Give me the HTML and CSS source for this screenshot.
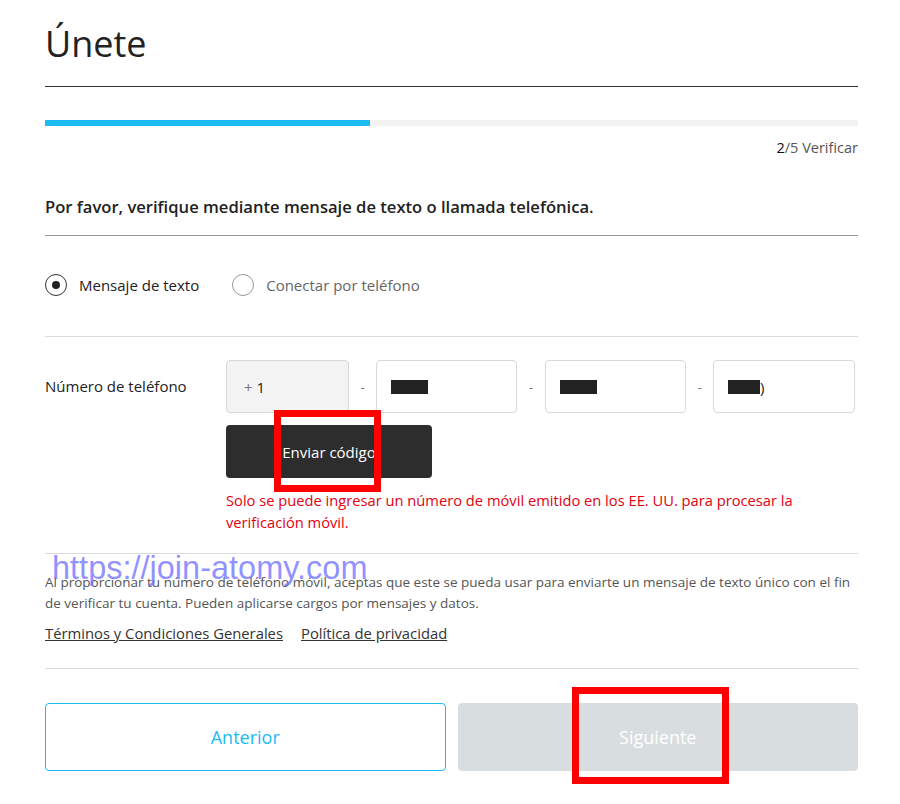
FILE: index.html
```html
<!DOCTYPE html>
<html>
<head>
<meta charset="utf-8">
<title>Únete</title>
<link rel="stylesheet" href="styles.css">
</head>
<body>

<div class="page">

<h1 class="title">Únete</h1>
<div class="rule-dark"></div>

<div class="progress"><div class="progress-fill" style="width:40%"></div></div>
<div class="step"><b>2</b>/5 Verificar</div>

<p class="question">Por favor, verifique mediante mensaje de texto o llamada telefónica.</p>
<div class="rule-mid"></div>

<div class="radios">
  <label class="radio checked"><span class="circle"></span>Mensaje de texto</label>
  <label class="radio"><span class="circle"></span>Conectar por teléfono</label>
</div>
<div class="rule-light"></div>

<div class="phone">
  <div class="phone-label">Número de teléfono</div>
  <div class="phone-body">
    <div class="phone-fields">
      <div class="field code"><span class="plus">+</span> 1</div>
      <span class="dash">-</span>
      <div class="field"><span class="redact"></span></div>
      <span class="dash">-</span>
      <div class="field"><span class="redact"></span></div>
      <span class="dash">-</span>
      <div class="field"><span class="redact short"></span>)</div>
    </div>
    <button class="send">Enviar código</button>
    <p class="error">Solo se puede ingresar un número de móvil emitido en los EE. UU. para procesar la verificación móvil.</p>
  </div>
</div>
<div class="rule-light"></div>

<p class="notice">Al proporcionar tu número de teléfono móvil, aceptas que este se pueda usar para enviarte un mensaje de texto único con el fin de verificar tu cuenta. Pueden aplicarse cargos por mensajes y datos.</p>
<div class="links">
  <a href="#">Términos y Condiciones Generales</a>
  <a href="#">Política de privacidad</a>
</div>
<div class="rule-light bottom"></div>

<div class="actions">
  <button class="prev">Anterior</button>
  <button class="next">Siguiente</button>
</div>

</div>

<div class="watermark">https://join-atomy.com</div>
<div class="mark mark-send"></div>
<div class="mark mark-next"></div>

</body>
</html>
```

FILE: styles.css
```css
body{
margin:0;
background-color:white;
font-family:"Open Sans", "Noto Sans", sans-serif;
color:#222;
}

.page{
width:813px;
padding:22px 42px 0 45px;
}

.title{
margin:0;
font-size:36px;
line-height:44px;
font-weight:400;
color:#222;
}

.rule-dark{
height:1px;
background-color:#333;
margin-top:20px;
}

.rule-mid{
height:1px;
background-color:#999;
margin-top:16px;
}

.rule-light{
height:1px;
background-color:#d9dcde;
}

.progress{
height:6px;
background-color:#f2f2f2;
margin-top:33px;
}

.progress-fill{
height:6px;
background-color:#1bbcf2;
}

.step{
text-align:right;
font-size:14.5px;
line-height:20px;
color:#555;
margin-top:12px;
}
.step b{
font-weight:400;
color:#111;
}

.question{
margin:37px 0 0 0;
font-size:16.6px;
line-height:24px;
font-weight:600;
color:#222;
}

.radios{
display:flex;
gap:33px;
padding:37px 0 39px 0;
}

.radio{
display:flex;
align-items:center;
gap:12px;
font-size:15px;
line-height:24px;
color:#666;
}
.radio.checked{
color:#222;
}

.circle{
width:22px;
height:22px;
box-sizing:border-box;
border:1px solid #999;
border-radius:50%;
display:flex;
align-items:center;
justify-content:center;
}
.radio.checked .circle{
border-color:#333;
}
.radio.checked .circle::after{
content:"";
width:8px;
height:8px;
border-radius:50%;
background-color:#222;
}

.phone{
display:flex;
padding-top:23px;
padding-bottom:20px;
}

.phone-label{
width:181px;
height:51px;
display:flex;
align-items:center;
font-size:15px;
color:#222;
}

.phone-fields{
display:grid;
grid-template-columns:123px 27px 141px 28px 141px 27px 142px;
}

.field{
height:53px;
box-sizing:border-box;
border:1px solid #d6d9dc;
border-radius:4px;
display:flex;
align-items:center;
padding-left:14px;
font-size:15px;
color:#222;
}
.field.code{
background-color:#f3f3f3;
padding-left:17px;
}
.plus{
color:#777;
margin-right:4px;
}

.redact{
display:inline-block;
width:37px;
height:14px;
background-color:#222;
}
.redact.short{
width:32px;
}

.dash{
display:flex;
align-items:center;
justify-content:center;
color:#777;
font-size:13px;
}

.send{
display:block;
margin-top:12px;
width:206px;
height:53px;
border:none;
border-radius:4px;
background-color:#2d2d2d;
color:white;
font-family:"Open Sans", sans-serif;
font-size:15px;
}

.error{
margin:11px 0 0 0;
font-size:14.7px;
line-height:22px;
color:#e3000f;
width:600px;
}

.notice{
margin:18px 0 0 0;
font-size:13.5px;
line-height:21px;
color:#555;
}

.links{
display:flex;
gap:18px;
margin-top:9px;
margin-bottom:24px;
font-size:14.8px;
line-height:21px;
}
.links a{
color:#333;
}

.actions{
display:flex;
gap:12px;
margin-top:34px;
}
.actions button{
flex:1;
height:68px;
border-radius:4px;
font-family:"Open Sans", sans-serif;
font-size:18px;
}
.prev{
background-color:white;
border:1px solid #1bbcf2;
color:#1bbcf2;
}
.next{
background-color:#d8dde0;
border:1px solid #d8dde0;
color:white;
}

.watermark{
position:absolute;
left:52px;
top:550px;
font-family:"Liberation Sans", Arial, sans-serif;
font-size:32.5px;
color:rgba(110,110,255,0.75);
}

.mark{
position:absolute;
box-sizing:border-box;
border:7px solid #ff0000;
}
.mark-send{
left:274px;
top:410px;
width:107px;
height:82px;
}
.mark-next{
left:572px;
top:687px;
width:157px;
height:97px;
}
```
